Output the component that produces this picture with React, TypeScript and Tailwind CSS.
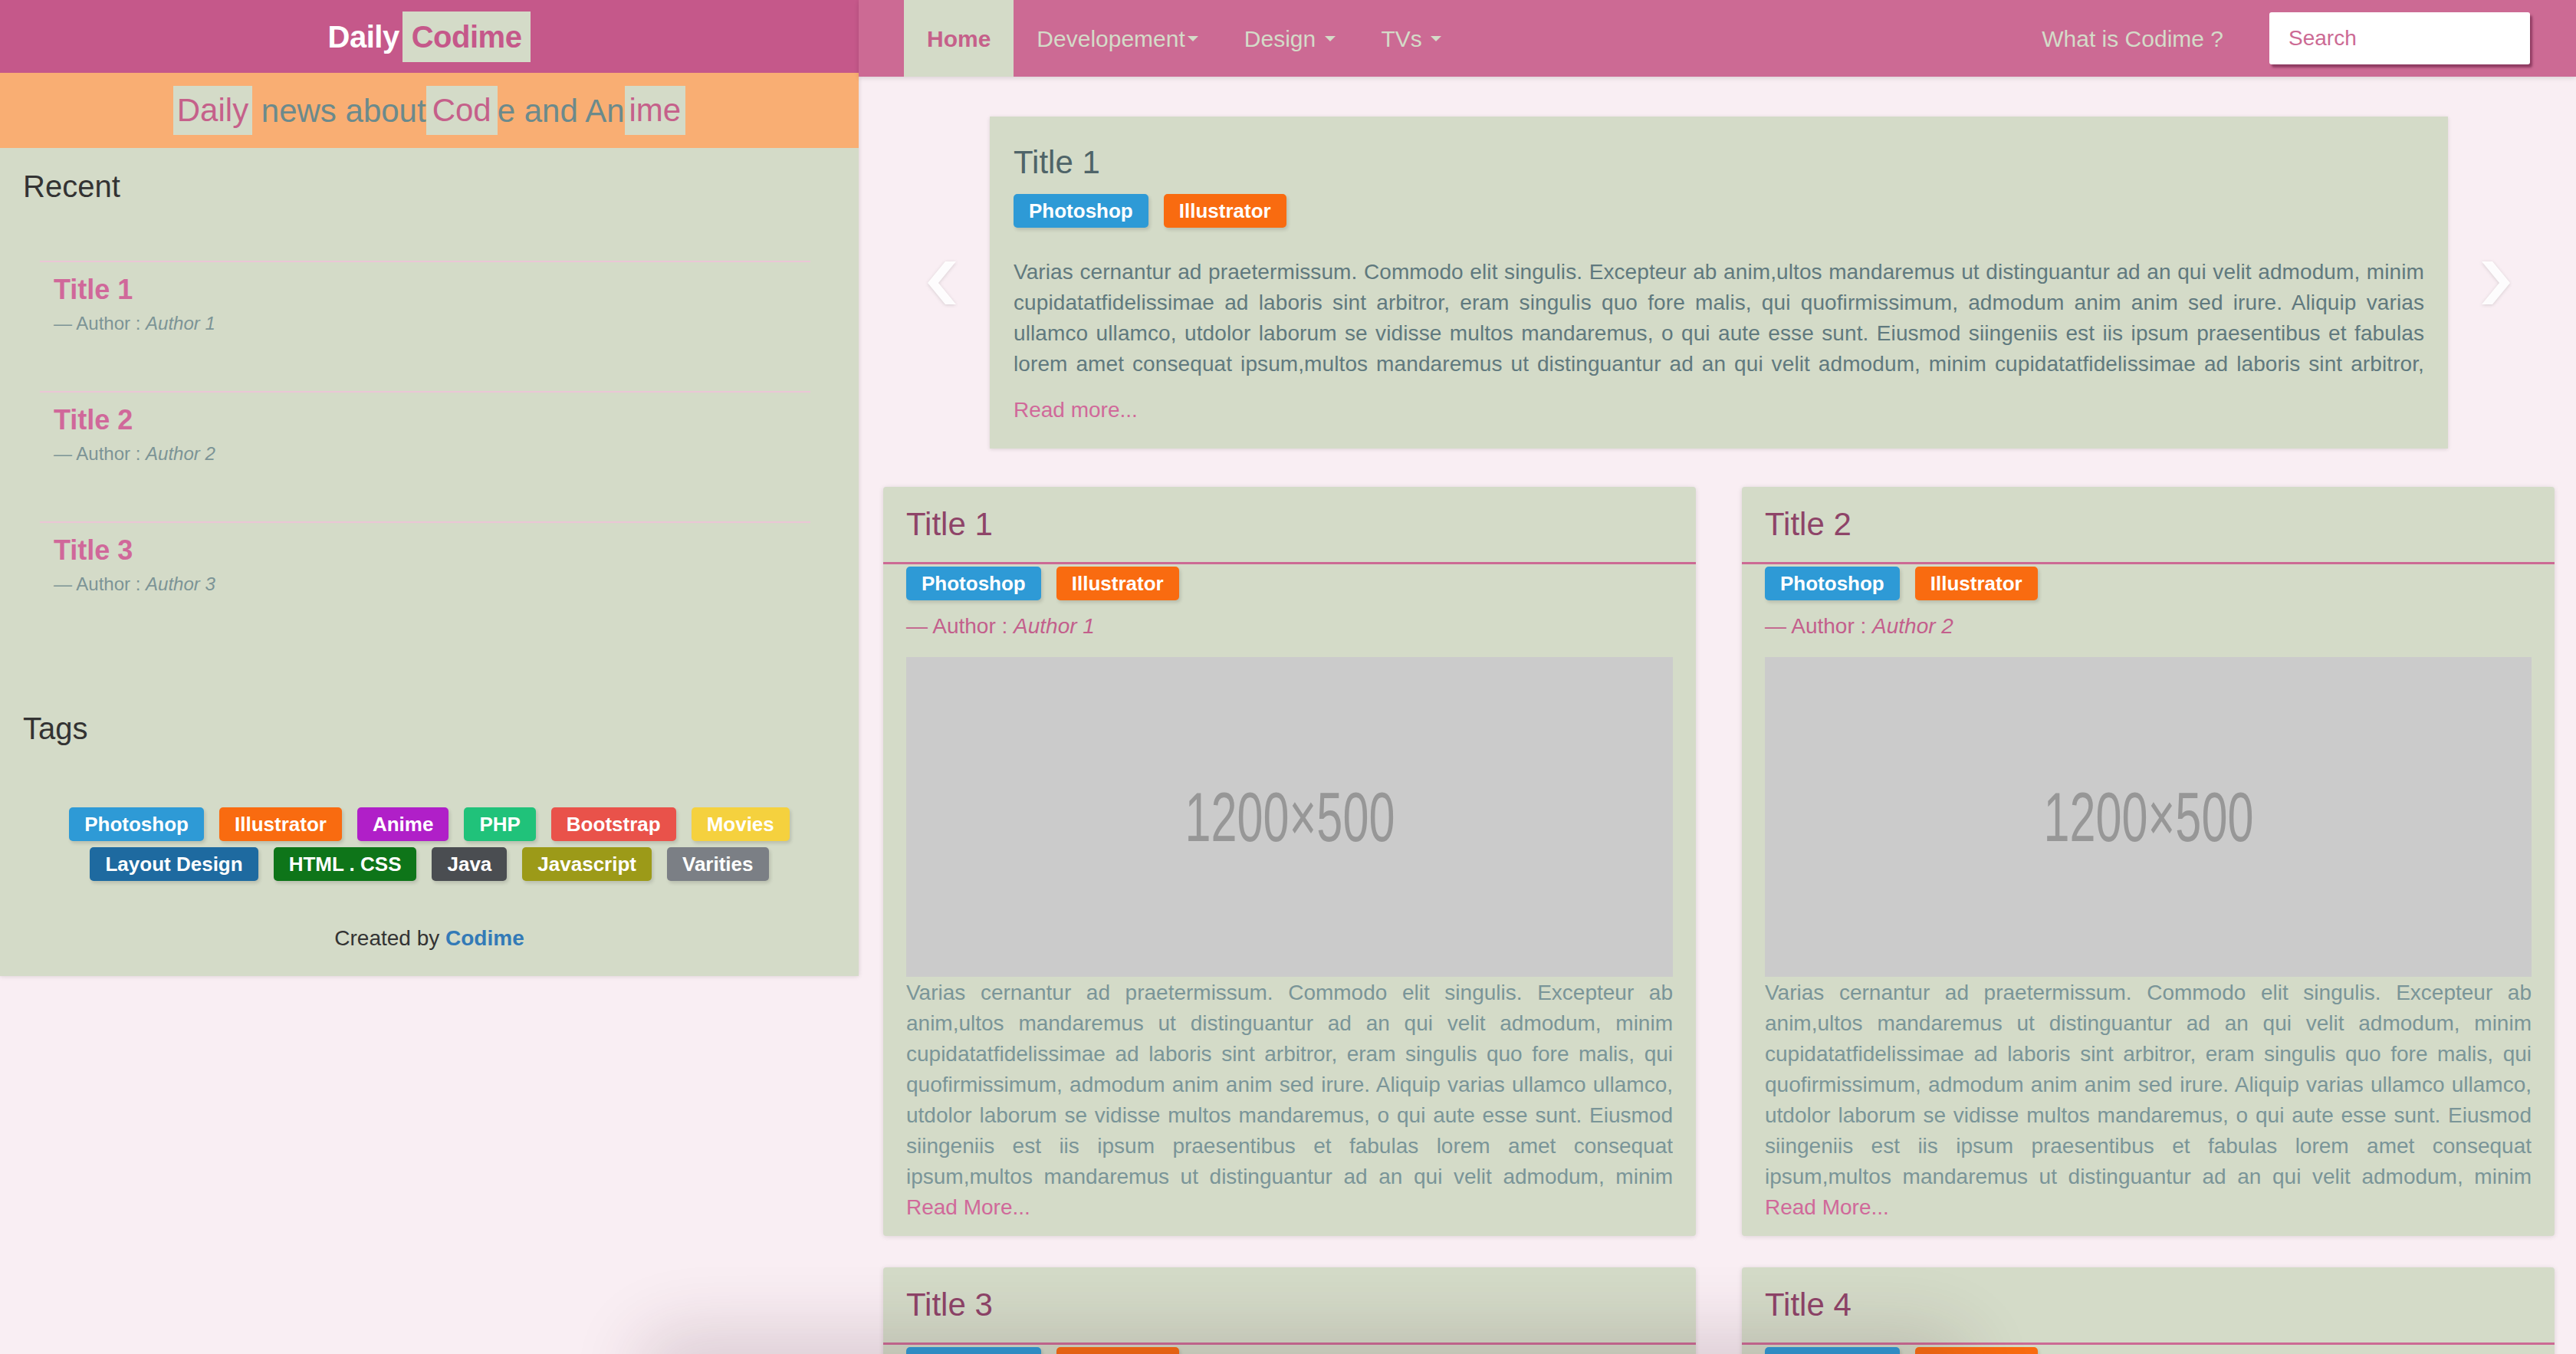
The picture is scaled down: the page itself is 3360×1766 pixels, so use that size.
import React from 'react';

const LOREM =
  'Varias cernantur ad praetermissum. Commodo elit singulis. Excepteur ab anim,ultos mandaremus ut distinguantur ad an qui velit admodum, minim cupidatatfidelissimae ad laboris sint arbitror, eram singulis quo fore malis, qui quofirmissimum, admodum anim anim sed irure. Aliquip varias ullamco ullamco, utdolor laborum se vidisse multos mandaremus, o qui aute esse sunt. Eiusmod siingeniis est iis ipsum praesentibus et fabulas lorem amet consequat ipsum,multos mandaremus ut distinguantur ad an qui velit admodum, minim';

// the text keeps running after "minim" with the middle of the sentence again
const TEXT = `${LOREM} ${LOREM.slice(LOREM.indexOf('cupidatat'))}`;

type TagItem = { label: string; color: string };

const sideTags: TagItem[] = [
  { label: 'Photoshop', color: 'bg-[#2e9ad6]' },
  { label: 'Illustrator', color: 'bg-[#f96b10]' },
  { label: 'Anime', color: 'bg-[#b01fc8]' },
  { label: 'PHP', color: 'bg-[#20c27a]' },
  { label: 'Bootstrap', color: 'bg-[#e9524a]' },
  { label: 'Movies', color: 'bg-[#f5d13e]' },
  { label: 'Layout Design', color: 'bg-[#1e6aa0]' },
  { label: 'HTML . CSS', color: 'bg-[#0e7519]' },
  { label: 'Java', color: 'bg-[#4a4d51]' },
  { label: 'Javascript', color: 'bg-[#9c9a18]' },
  { label: 'Varities', color: 'bg-[#7b7f85]' },
];

const postTags: TagItem[] = [
  { label: 'Photoshop', color: 'bg-[#2e9ad6]' },
  { label: 'Illustrator', color: 'bg-[#f96b10]' },
];

const recent = [
  { title: 'Title 1', author: 'Author 1' },
  { title: 'Title 2', author: 'Author 2' },
  { title: 'Title 3', author: 'Author 3' },
];

const posts = [
  { title: 'Title 1', author: 'Author 1' },
  { title: 'Title 2', author: 'Author 2' },
  { title: 'Title 3', author: 'Author 3' },
  { title: 'Title 4', author: 'Author 4' },
];

const Tag: React.FC<TagItem> = ({ label, color }) => (
  <span
    className={`inline-block h-[44px] rounded-[5px] px-[20px] text-[26px] font-bold leading-[44px] text-white shadow-[2px_3px_4px_rgba(0,0,0,0.13)] ${color}`}
  >
    {label}
  </span>
);

const Caret = () => (
  <span className="ml-[3px] inline-block h-0 w-0 border-x-[7px] border-t-[7px] border-x-transparent border-t-[#d4dbc8] align-middle" />
);

const Chevron: React.FC<{ dir: 'left' | 'right' }> = ({ dir }) => (
  <svg width="39" height="56" viewBox="0 0 39 56" className="drop-shadow-[0_1px_2px_rgba(0,0,0,0.15)]">
    {dir === 'left' ? (
      <polygon points="24,0 38,0 15,28 38,56 24,56 1,28" fill="#ffffff" fillOpacity="0.92" />
    ) : (
      <polygon points="15,0 1,0 24,28 1,56 15,56 38,28" fill="#ffffff" fillOpacity="0.92" />
    )}
  </svg>
);

const Sidebar = () => (
  <aside className="w-[1120px] shrink-0 self-start bg-[#d4dbc8] shadow-[0_0_6px_rgba(0,0,0,0.15)]">
    <div className="flex h-[95px] items-center justify-center bg-[#c5588a]">
      <span className="text-[40px] font-bold tracking-[-0.5px] text-white">Daily</span>
      <span className="ml-[4px] flex h-[66px] items-center bg-[#d4dbc8] px-[12px] text-[40px] font-bold tracking-[-0.5px] text-[#c5588a]">
        Codime
      </span>
    </div>
    <div className="flex h-[98px] items-center justify-center bg-[#f9ae73] text-[42px] text-[#6b8a8c]">
      <span className="inline-block h-[64px] bg-[#d4dbc8] px-[5px] leading-[64px] text-[#c5608a]">Daily</span>
      <span className="whitespace-pre">&nbsp;news about</span>
      <span className="inline-block h-[64px] bg-[#d4dbc8] px-[8px] leading-[64px] text-[#c5608a]">Cod</span>
      <span className="whitespace-pre">e and An</span>
      <span className="inline-block h-[64px] bg-[#d4dbc8] px-[6px] leading-[64px] text-[#c5608a]">ime</span>
    </div>

    <div className="px-[30px] pt-[28px] pb-[29px]">
      <h3 className="text-[40px] leading-[44px] text-[#333333]">Recent</h3>
      <ul className="mt-[75px] ml-[22px] mr-[33px]">
        {recent.map((r) => (
          <li key={r.title} className="h-[170px] border-t-2 border-[#ebc6d6] pt-[16px] pl-[18px]">
            <div className="text-[36px] font-bold leading-[40px] text-[#d0689a]">{r.title}</div>
            <div className="mt-[7px] text-[24px] leading-[34px] text-[#7c9496]">
              — Author : <em>{r.author}</em>
            </div>
          </li>
        ))}
      </ul>

      <h3 className="mt-[78px] text-[40px] leading-[44px] text-[#333333]">Tags</h3>
      <div className="mt-[81px] flex flex-wrap justify-center gap-x-[20px] gap-y-[8px]">
        {sideTags.map((t) => (
          <Tag key={t.label} {...t} />
        ))}
      </div>

      <p className="mt-[55px] text-center text-[28px] leading-[40px] text-[#333333]">
        Created by <span className="font-bold text-[#337ab7]">Codime</span>
      </p>
    </div>
  </aside>
);

const Navbar = () => (
  <nav className="relative z-10 flex h-[100px] items-stretch bg-[#cc6a94] pl-[59px] pr-[60px] text-[30px] text-[#d4dbc8] shadow-[0_2px_6px_rgba(0,0,0,0.12)]">
    <a className="flex items-center bg-[#d4dbc8] px-[30px] font-bold text-[#c5608a]">Home</a>
    <a className="flex items-center px-[30px]">
      Developement
      <Caret />
    </a>
    <a className="flex items-center px-[30px]">
      Design&nbsp;
      <Caret />
    </a>
    <a className="flex items-center px-[30px]">
      TVs&nbsp;
      <Caret />
    </a>
    <div className="ml-auto flex items-center">
      <a className="px-[30px]">What is Codime ?</a>
      <div className="ml-[30px] flex h-[68px] w-[340px] items-center rounded-[3px] bg-white pl-[25px] text-[28px] text-[#cc6a94] shadow-[3px_4px_3px_rgba(110,35,70,0.65)]">
        Search
      </div>
    </div>
  </nav>
);

const Carousel = () => (
  <div className="mt-[52px] flex items-center">
    <div className="flex w-[139px] shrink-0 justify-center pl-[14px]">
      <Chevron dir="left" />
    </div>
    <div className="flex-1 bg-[#d4dbc8] px-[31px] pt-[37px] pb-[30px] shadow-[0_1px_5px_rgba(0,0,0,0.12)]">
      <h2 className="text-[42px] leading-[46px] text-[#4f6468]">Title 1</h2>
      <div className="mt-[18px] flex gap-[20px]">
        {postTags.map((t) => (
          <Tag key={t.label} {...t} />
        ))}
      </div>
      <p className="mt-[38px] h-[160px] overflow-hidden text-justify text-[28px] leading-[40px] tracking-[0.1px] text-[#60797e]">
        {TEXT}
      </p>
      <a className="mt-[20px] block text-[28px] leading-[40px] text-[#d0699a]">Read more...</a>
    </div>
    <div className="flex w-[139px] shrink-0 justify-center pr-[14px]">
      <Chevron dir="right" />
    </div>
  </div>
);

const PostCard: React.FC<{ title: string; author: string }> = ({ title, author }) => (
  <div className="overflow-hidden rounded-[4px] bg-[#d4dbc8] shadow-[0_1px_6px_rgba(0,0,0,0.12)]">
    <div className="border-b-[3px] border-[#cc6a94] px-[30px] py-[26px]">
      <h2 className="text-[42px] leading-[46px] text-[#8e4468]">{title}</h2>
    </div>
    <div className="px-[30px] pb-[17px]">
      <div className="mt-[3px] flex gap-[20px]">
        {postTags.map((t) => (
          <Tag key={t.label} {...t} />
        ))}
      </div>
      <div className="mt-[14px] text-[28px] leading-[40px] text-[#c35f8c]">
        — Author : <em>{author}</em>
      </div>
      <div className="mt-[20px] flex h-[417px] items-center justify-center bg-[#cbcbcb]">
        <span className="inline-block scale-x-[0.68] text-[90px] leading-none text-[#979797]">1200×500</span>
      </div>
      <p className="mt-[1px] h-[280px] overflow-hidden text-justify text-[28px] leading-[40px] text-[#7a9598]">{TEXT}</p>
      <a className="block text-[28px] leading-[40px] text-[#d0699a]">Read More...</a>
    </div>
  </div>
);

export default function App() {
  return (
    <div className="relative flex h-[1766px] overflow-hidden bg-[#f9eef3] font-['Liberation_Sans',Arial,sans-serif]">
      <Sidebar />
      <main className="min-w-0 flex-1">
        <Navbar />
        <div className="pl-[32px] pr-[28px]">
          <Carousel />
          <div className="mt-[50px] grid grid-cols-2 gap-x-[60px] gap-y-[41px]">
            {posts.map((p) => (
              <PostCard key={p.title} {...p} />
            ))}
          </div>
        </div>
      </main>
      <div className="pointer-events-none fixed bottom-[-50px] left-[860px] h-[50px] w-[1680px] rounded-full shadow-[0_0_90px_30px_rgba(70,30,50,0.16)]" />
    </div>
  );
}
